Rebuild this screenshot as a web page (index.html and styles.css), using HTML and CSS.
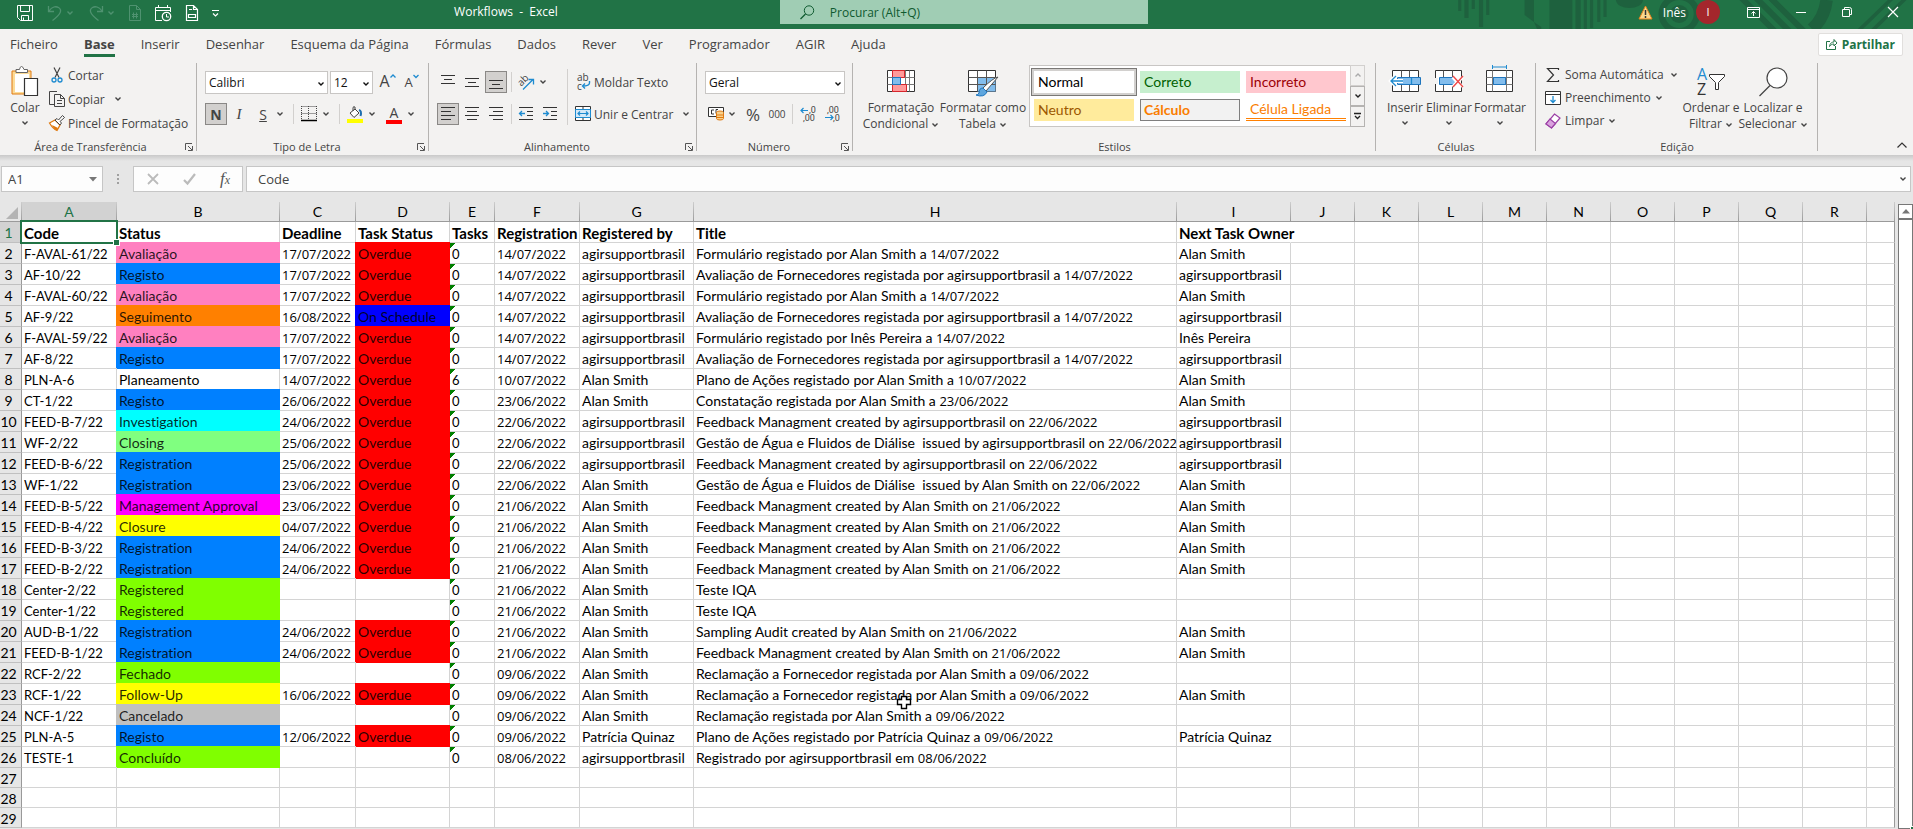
FILE: index.html
```html
<!DOCTYPE html>
<html lang="pt">
<head>
  <meta charset="UTF-8">
  <meta name="viewport" content="width=device-width, initial-scale=1.0">
  <title>Workflows - Excel</title>
  <link rel="stylesheet" href="styles.css">
</head>
<body>
  <svg class="sprite" aria-hidden="true">
    <symbol id="chev" viewBox="0 0 8 6"><path d="M1.5 1.5L4 4L6.5 1.5" fill="none" stroke="currentColor" stroke-width="1.4"/></symbol>
    <symbol id="launch" viewBox="0 0 8 8"><path d="M.5 7V.5H7M3 3L7 7M7.5 3V7.5H3" fill="none" stroke="#555"/></symbol>
  </svg>

  <header class="titlebar">
    <svg class="pattern" viewBox="0 0 450 29" preserveAspectRatio="none" aria-hidden="true">
      <g fill="#1e613e">
        <path d="M5 0h3v11H5zM11 0h4v18h-4zM18 0h3v9h-3zM25 0h4v27h-4zM32 0h3v15h-3zM69 0h9v22l-9-7zM78 22l7 5v2h-4zM93 0h22v29H93zM118 0h5v29h-5zM126 0h3v29h-3zM132 0h3v28h-3zM139 0h3v22h-3zM145 0h3v17h-3z"/>
        <path d="M157 0h26a13 8 0 0 1-26 0z"/>
        <path d="M390 29L419 0h5L395 29zM403 29L432 0h5L408 29z"/>
        <path d="M284 0l28 29h-8L276 0zM298 0l28 29h-8L290 0zM312 0l28 29h-8L304 0z"/>
      </g>
      <circle cx="218" cy="14" r="17" fill="none" stroke="#1e613e" stroke-width="6"/>
      <circle cx="218" cy="14" r="9" fill="#1e613e"/>
      <path d="M346 29Q358 18 360 0" fill="none" stroke="#1e613e" stroke-width="12"/>
    </svg>
    <div class="qat">
      <button aria-label="Guardar"><svg width="16" height="16"><path d="M.5.5h15v15H3.5l-3-3zM3.5.5v6h9v-6M4.500 15.500v-5h7v5M6.500 12.500v3" fill="none" stroke="#fff"/></svg></button>
      <button class="off" aria-label="Anular"><svg width="16" height="16"><path d="M1.500 1v5.500H7M2 6C5 1.500 9 1 11.500 2.500c4 2.500 2.500 6.500-6 13" fill="none" stroke="currentColor" stroke-width="1.300"/></svg><svg class="chev"><use href="#chev"/></svg></button>
      <button class="off" aria-label="Refazer"><svg width="16" height="16"><path d="M14.500 1v5.500H9M14 6C11 1.500 7 1 4.500 2.500c-4 2.500-2.500 6.500 6 13" fill="none" stroke="currentColor" stroke-width="1.300"/></svg><svg class="chev"><use href="#chev"/></svg></button>
      <button class="off" aria-label="Novo"><svg width="12" height="16"><path d="M.5.5h7l4 4v11H.5zM7.500.5v4h4M4.500 7.500v6M7.500 7.500v6M3 9.500h6M3 11.500h6" fill="none" stroke="currentColor"/></svg></button>
      <button aria-label="Calendário"><svg width="17" height="17"><path d="M7 15.500H.5v-13h15V7M.5 5.500h15M3.500 0v3M12.500 0v3" fill="none" stroke="#fff"/><circle cx="11.500" cy="11.500" r="4.200" fill="none" stroke="#fff" stroke-width="1.300"/><path d="M11.500 9v3H14" fill="none" stroke="#fff"/></svg></button>
      <button aria-label="Pré-visualizar"><svg width="12" height="16"><path d="M.5.5h7l4 4v11H.5zM7.500.5v4h4M3 4.500h3M2.500 9.500h7v3h-7z" fill="none" stroke="#fff" stroke-width="1.200"/></svg></button>
      <button aria-label="Personalizar"><svg width="7" height="7"><path d="M0 .5h7M1 3.500L3.500 6L6 3.500" fill="none" stroke="#fff" stroke-width="1.200"/></svg></button>
    </div>
    <div class="doc-title">Workflows&nbsp; -&nbsp; Excel</div>
    <label class="search">
      <svg width="15" height="15"><circle cx="9" cy="5.500" r="4.700" fill="none" stroke="#0f5a30"/><path d="M5.500 9L.5 14" stroke="#0f5a30" stroke-width="1.200"/></svg>
      <input type="search" placeholder="Procurar (Alt+Q)" aria-label="Procurar">
    </label>
    <div class="account">
      <svg width="15" height="15"><path d="M7.500 1L14 14H1z" fill="#f9d98c" stroke="#e8811a"/><path d="M7.500 5v5M7.500 11v2" stroke="#333" stroke-width="1.500"/></svg>
      <span class="user">Inês</span>
      <span class="avatar">I</span>
      <button aria-label="Opções do friso"><svg width="13" height="11"><path d="M.5.5h12v10H.5zM.5 2.500h12M6.500 9V4.500M4.500 6.500l2-2 2 2" fill="none" stroke="#fff"/></svg></button>
      <button aria-label="Minimizar"><svg width="10" height="10"><path d="M0 5.500h10" stroke="#fff"/></svg></button>
      <button aria-label="Restaurar"><svg width="10" height="10"><path d="M.5 2.500h7v7h-7zM2.500 2V.5h5q2 0 2 2V7.500H8" fill="none" stroke="#fff"/></svg></button>
      <button aria-label="Fechar"><svg width="10" height="10"><path d="M0 0l10 10M10 0L0 10" stroke="#fff" stroke-width="1.200"/></svg></button>
    </div>
  </header>

  <nav class="tabs">
    <a href="#">Ficheiro</a>
    <a href="#" class="active">Base</a>
    <a href="#">Inserir</a>
    <a href="#">Desenhar</a>
    <a href="#">Esquema da Página</a>
    <a href="#">Fórmulas</a>
    <a href="#">Dados</a>
    <a href="#">Rever</a>
    <a href="#">Ver</a>
    <a href="#">Programador</a>
    <a href="#">AGIR</a>
    <a href="#">Ajuda</a>
    <button class="share"><svg width="12" height="12"><path d="M4 3.500H.5v8h9V8M3.500 8.500C4 5 6 4 8 4V1.500L11 5 8 8V6C6 6 4.500 7 3.500 8.500z" fill="none" stroke="#217346"/></svg>Partilhar</button>
  </nav>

  <section class="ribbon">
    <div class="group clipboard">
      <div class="tools">
        <button class="big"><svg width="28" height="32"><path d="M1 5h19v23H1z" fill="#fcdb98" stroke="#e07a10"/><path d="M4 8h14v18H4z" fill="#fff"/><path d="M5 6.500V3.500h3.500Q9 .5 10.500.5T13 3.500h3.500v3z" fill="#fff" stroke="#666"/><path d="M13.500 12.500h13v17h-13z" fill="#fff" stroke="#333" stroke-width="1.200"/></svg><span>Colar</span><svg class="chev"><use href="#chev"/></svg></button>
        <div class="stack">
          <button><svg width="16" height="16"><path d="M5 .5l5 10M11 .5L6 10.500" fill="none" stroke="#444" stroke-width="1.200"/><circle cx="5" cy="13" r="2" fill="none" stroke="#1e8bd0" stroke-width="1.300"/><circle cx="11" cy="13" r="2" fill="none" stroke="#1e8bd0" stroke-width="1.300"/></svg>Cortar</button>
          <button><svg width="16" height="16"><path d="M5.500 13.500h-5V.5H8M5.500 3.500h6l4 4v8h-10zM11.500 3.500v4h4M8 9.500h5M8 12.500h5" fill="none" stroke="#444"/></svg>Copiar<svg class="chev far"><use href="#chev"/></svg></button>
          <button><svg width="16" height="16"><path d="M.5 8L6 5l5 5-3 5.500Q4 14 .5 8z" fill="#fff" stroke="#e07a10" stroke-width="1.300"/><path d="M3 10l6 3-1 2.500Q5 14.500 3 10z" fill="#e07a10"/><path d="M6 5l2-1.500L9.500 5 13.500.5l2 2L11 6.500 12.500 8 11 10z" fill="#fff" stroke="#444"/></svg>Pincel de Formatação</button>
        </div>
      </div>
      <div class="caption">Área de Transferência<svg class="launch"><use href="#launch"/></svg></div>
    </div>

    <div class="group font">
      <div class="rows">
        <div class="row">
          <span class="combo family"><select aria-label="Tipo de letra"><option>Calibri</option></select><svg class="chev"><use href="#chev"/></svg></span>
          <span class="combo size"><select aria-label="Tamanho"><option>12</option></select><svg class="chev"><use href="#chev"/></svg></span>
          <button class="ic grow" aria-label="Aumentar">A<svg width="6" height="5"><path d="M.5 3.500L3 1l2.500 2.500" fill="none" stroke="#1e8bd0" stroke-width="1.300"/></svg></button>
          <button class="ic grow small" aria-label="Diminuir">A<svg width="6" height="5"><path d="M.5 1L3 3.500 5.500 1" fill="none" stroke="#1e8bd0" stroke-width="1.300"/></svg></button>
        </div>
        <div class="row">
          <button class="ic on"><b>N</b></button>
          <button class="ic wide"><i>I</i></button>
          <button class="ic wide"><u>S</u></button>
          <svg class="chev"><use href="#chev"/></svg>
          <span class="sep"></span>
          <button class="ic wide" aria-label="Limites"><svg width="16" height="16"><path d="M.5.5h15M.5 7.500h15M.5 0v14M7.500 0v14M15.500 0v14" stroke="#444" stroke-dasharray="1 1"/><path d="M0 14.500h16" stroke="#000" stroke-width="1.500"/></svg></button>
          <svg class="chev"><use href="#chev"/></svg>
          <span class="sep"></span>
          <button class="ic wide" aria-label="Cor de preenchimento"><svg width="16" height="17"><path d="M3 7l5-4 4 4-5 4.500zM6 5V2q0-2 2-1v3" fill="#fff" stroke="#444"/><path d="M12 4q3 1 1.500 6" fill="none" stroke="#1e6fb0" stroke-width="2"/><path d="M0 13h16v4H0z" fill="#ff0"/></svg></button>
          <svg class="chev"><use href="#chev"/></svg>
          <button class="ic wide color">A</button>
          <svg class="chev"><use href="#chev"/></svg>
        </div>
      </div>
      <div class="caption">Tipo de Letra<svg class="launch"><use href="#launch"/></svg></div>
    </div>

    <div class="group align">
      <div class="tools">
        <div class="rows">
          <div class="row">
            <button class="ic" aria-label="Alinhar em cima"><svg width="14" height="14"><path d="M0 .5h14M3 4.500h8M0 8.500h14" stroke="#333"/></svg></button>
            <button class="ic" aria-label="Alinhar ao meio"><svg width="14" height="14"><path d="M0 3.500h14M3 7.500h8M0 11.500h14" stroke="#333"/></svg></button>
            <button class="ic on" aria-label="Alinhar em baixo"><svg width="14" height="14"><path d="M0 5.500h14M3 9.500h8M0 13.500h14" stroke="#333"/></svg></button>
            <span class="sep"></span>
            <button class="ic" aria-label="Orientação"><svg width="17" height="16"><path d="M5 15.500L15 5.500M10.500 5.500h5v5" fill="none" stroke="#1e8bd0" stroke-width="1.300"/><text x="0" y="9" transform="rotate(-45 6 7)" class="tiny">ab</text></svg></button>
            <svg class="chev"><use href="#chev"/></svg>
          </div>
          <div class="row">
            <button class="ic on" aria-label="Alinhar à esquerda"><svg width="14" height="14"><path d="M0 .5h14M0 4.500h10M0 8.500h14M0 12.500h10" stroke="#333"/></svg></button>
            <button class="ic" aria-label="Centrar"><svg width="14" height="14"><path d="M0 .5h14M2 4.500h10M0 8.500h14M2 12.500h10" stroke="#333"/></svg></button>
            <button class="ic" aria-label="Alinhar à direita"><svg width="14" height="14"><path d="M0 .5h14M4 4.500h10M0 8.500h14M4 12.500h10" stroke="#333"/></svg></button>
            <span class="sep"></span>
            <button class="ic" aria-label="Diminuir avanço"><svg width="14" height="14"><path d="M0 .5h14M8 4.500h6M8 8.500h6M0 12.500h14" stroke="#333"/><path d="M6 6.500H.5M3 4L.5 6.500 3 9" fill="none" stroke="#1e8bd0" stroke-width="1.300"/></svg></button>
            <button class="ic" aria-label="Aumentar avanço"><svg width="14" height="14"><path d="M0 .5h14M8 4.500h6M8 8.500h6M0 12.500h14" stroke="#333"/><path d="M0 6.500h5.500M3 4l2.500 2.500L3 9" fill="none" stroke="#1e8bd0" stroke-width="1.300"/></svg></button>
          </div>
        </div>
        <div class="rows merge">
          <button class="row text"><svg width="16" height="18"><text x="2" y="8" class="tiny">ab</text><text x="2" y="17" class="tiny">c</text><path d="M14.500 8v2q0 3-7 3M10 10.500L7.500 13l2.500 2.500" fill="none" stroke="#1e8bd0" stroke-width="1.400"/></svg>Moldar Texto</button>
          <button class="row text"><svg width="16" height="16"><path d="M.5.5h15v14H.5zM8 0v3M8 12v3" fill="#fff" stroke="#333"/><path d="M.5 3.500h15v8H.5z" fill="#d5e9f8" stroke="#1e8bd0"/><path d="M3 7.500h10M5 5.500l-2 2 2 2M11 5.500l2 2-2 2" fill="none" stroke="#1e8bd0" stroke-width="1.200"/></svg>Unir e Centrar<svg class="chev far"><use href="#chev"/></svg></button>
        </div>
      </div>
      <div class="caption">Alinhamento<svg class="launch"><use href="#launch"/></svg></div>
    </div>

    <div class="group number">
      <div class="rows">
        <div class="row">
          <span class="combo format"><select aria-label="Formato de número"><option>Geral</option></select><svg class="chev"><use href="#chev"/></svg></span>
        </div>
        <div class="row">
          <button class="ic" aria-label="Contabilidade"><svg width="17" height="14"><path d="M.5.5h15v9H.5z" fill="#fff" stroke="#333"/><path d="M6 3H3.500v4H6M10 2.500H8v4" fill="none" stroke="#333"/><path d="M8.500 5.500v6q0 1.500 3.500 1.500t3.500-1.500v-6q0-1.500-3.500-1.500T8.500 5.500z" fill="#f9d08a" stroke="#e07a10"/><path d="M8.500 8h7M8.500 10.500h7" stroke="#e07a10"/></svg></button>
          <svg class="chev"><use href="#chev"/></svg>
          <button class="ic wide percent">%</button>
          <button class="ic wide zeros">000</button>
          <span class="sep"></span>
          <button class="ic wide" aria-label="Aumentar casas decimais"><svg width="17" height="16"><text x="9" y="7" class="digits">,0</text><text x="3" y="15" class="digits">,00</text><path d="M8 4.500H1M3.500 2L1 4.500 3.500 7" fill="none" stroke="#1e8bd0" stroke-width="1.200"/></svg></button>
          <button class="ic wide" aria-label="Diminuir casas decimais"><svg width="17" height="16"><text x="3" y="7" class="digits">,00</text><text x="9" y="15" class="digits">,0</text><path d="M1 11.500h8M6.500 9L9 11.500 6.500 14" fill="none" stroke="#1e8bd0" stroke-width="1.200"/></svg></button>
        </div>
      </div>
      <div class="caption">Número<svg class="launch"><use href="#launch"/></svg></div>
    </div>

    <div class="group styles">
      <div class="tools">
        <button class="big w80"><svg width="28" height="32"><path d="M.5 4.500h27v21H.5z" fill="#fff" stroke="#333"/><path d="M.5 11.500h27M.5 18.500h27M5.500 4.500v21M18.500 4.500v21M22.500 4.500v21" stroke="#777"/><path d="M5.500 4.500h12v7h-12zM5.500 18.500h14v7h-14z" fill="#ff9a9a" stroke="#d8262c"/><path d="M5.500 11.500h8v7h-8z" fill="#83bdec" stroke="#1e75bd"/></svg><span>Formatação<br>Condicional <svg class="chev"><use href="#chev"/></svg></span></button>
        <button class="big w84"><svg width="32" height="32"><path d="M1.500 4.500h27v21h-27z" fill="#fff" stroke="#333"/><path d="M10.500 11.500h18v14h-18z" fill="#83bdec"/><path d="M1.500 11.500h27M1.500 18.500h27M10.500 4.500v21M19.500 4.500v21" stroke="#555"/><path d="M31 11l-12 14-3-3Q26 12 31 11z" fill="#fff" stroke="#555"/><path d="M16 22q-4 0-4 5-1 2-3 2 8 3 11-3z" fill="#5ea6de" stroke="#1e75bd"/></svg><span>Formatar como<br>Tabela <svg class="chev"><use href="#chev"/></svg></span></button>
        <div class="gallery">
          <button class="st normal">Normal</button>
          <button class="st good">Correto</button>
          <button class="st bad">Incorreto</button>
          <button class="st neutral">Neutro</button>
          <button class="st calc">Cálculo</button>
          <button class="st linked">Célula Ligada</button>
        </div>
        <div class="gallery-nav">
          <button class="up" aria-label="Linha anterior"><svg class="chev flip"><use href="#chev"/></svg></button>
          <button aria-label="Linha seguinte"><svg class="chev"><use href="#chev"/></svg></button>
          <button aria-label="Mais"><svg width="7" height="7"><path d="M0 .5h7M1 3L3.500 5.500 6 3" fill="none" stroke="#222" stroke-width="1.300"/></svg></button>
        </div>
      </div>
      <div class="caption">Estilos</div>
    </div>

    <div class="group cells">
      <div class="tools">
        <button class="big"><svg width="32" height="32"><path d="M3.500 4.500h26v21h-26z" fill="#fff" stroke="#333"/><path d="M12.500 4.500v21M20.500 4.500v21" stroke="#555"/><path d="M8.500 11.500h23v7h-23z" fill="#83bdec" stroke="#1e75bd"/><path d="M0 11h4v8H0z" fill="#f3f2f1"/><path d="M14 15H2M7 10l-5 5 5 5" fill="none" stroke="#fff" stroke-width="4"/><path d="M14 15H2M7 10l-5 5 5 5M22.500 12v6" fill="none" stroke="#1e8bd0" stroke-width="1.300"/></svg><span>Inserir</span><svg class="chev"><use href="#chev"/></svg></button>
        <button class="big w46"><svg width="30" height="32"><path d="M1.500 4.500h26v21h-26z" fill="#fff" stroke="#333"/><path d="M9.500 4.500v21M18.500 4.500v21" stroke="#555"/><path d="M0 12h4v6H0z" fill="#f3f2f1"/><path d="M5.500 11.500h14l3 3.500-3 3.500h-14z" fill="#83bdec" stroke="#1e75bd"/><path d="M19 11l9 10M28 11l-9 10" stroke="#fff" stroke-width="4"/><path d="M19 10l10 11M29 10L19 21" stroke="#f04848" stroke-width="1.400"/></svg><span>Eliminar</span><svg class="chev"><use href="#chev"/></svg></button>
        <button class="big w56"><svg width="28" height="32"><path d="M.5 4.500h26v21H.5z" fill="#fff" stroke="#333"/><path d="M.5 11.500h26M.5 18.500h26M6.500 4.500v21M20.500 4.500v21" stroke="#777"/><path d="M7.500 11.500h12v7h-12z" fill="#83bdec" stroke="#1e75bd"/><path d="M6 1h15M6.500-1v4M20.500-1v4" stroke="#1e8bd0"/></svg><span>Formatar</span><svg class="chev"><use href="#chev"/></svg></button>
      </div>
      <div class="caption">Células</div>
    </div>

    <div class="group editing">
      <div class="tools">
        <div class="stack">
          <button><svg width="16" height="16"><path d="M13.500 3V1.500h-11l6 6.500-6 6.500h11V13" fill="none" stroke="#333" stroke-width="1.200"/></svg>Soma Automática<svg class="chev far"><use href="#chev"/></svg></button>
          <button><svg width="16" height="16"><path d="M.5 1.500h15v13H.5zM.5 4.500h15" fill="#fff" stroke="#333"/><path d="M8 6v6.500M5.500 10L8 12.500l2.500-2.500" fill="none" stroke="#1e8bd0" stroke-width="1.300"/></svg>Preenchimento<svg class="chev"><use href="#chev"/></svg></button>
          <button><svg width="16" height="16"><path d="M9.500 1L15 5 6.500 15 1 11z" fill="#fff" stroke="#9b3fa5" stroke-width="1.200"/><path d="M5 6l5.500 4.500-4 4.500L1 11z" fill="#d9a3de" stroke="#9b3fa5" stroke-width="1.200"/></svg>Limpar<svg class="chev"><use href="#chev"/></svg></button>
        </div>
        <button class="big w56"><svg width="30" height="32"><text x="1" y="14" class="az a">A</text><text x="1" y="29" class="az">Z</text><path d="M13.500 8.500h15v2l-6 6v7h-3v-7l-6-6z" fill="#fff" stroke="#333"/></svg><span>Ordenar e<br>Filtrar <svg class="chev"><use href="#chev"/></svg></span></button>
        <button class="big w68"><svg width="30" height="32"><circle cx="19" cy="12" r="10" fill="#fff" stroke="#444" stroke-width="1.200"/><path d="M12 19.500L1.500 30" stroke="#444" stroke-width="1.300"/></svg><span>Localizar e<br>Selecionar <svg class="chev"><use href="#chev"/></svg></span></button>
      </div>
      <div class="caption">Edição</div>
    </div>
    <button class="collapse" aria-label="Recolher o friso"><svg width="10" height="6"><path d="M.5 5.500L5 1l4.500 4.500" fill="none" stroke="#333" stroke-width="1.200"/></svg></button>
  </section>

  <div class="formula-bar">
    <span class="name-box"><input value="A1" aria-label="Caixa de nome"><svg width="8" height="5"><path d="M0 0h8L4 4.500z" fill="#777"/></svg></span>
    <span class="dots"></span>
    <span class="fx">
      <button aria-label="Cancelar"><svg width="12" height="12"><path d="M1 1l10 10M11 1L1 11" stroke="#bbb" stroke-width="1.800"/></svg></button>
      <button aria-label="Introduzir"><svg width="13" height="12"><path d="M1 7l3.500 3.500L12 1" fill="none" stroke="#bbb" stroke-width="2.200"/></svg></button>
      <button class="fn"><i>f<small>x</small></i></button>
    </span>
    <span class="formula"><input value="Code" aria-label="Barra de fórmulas"><svg class="chev"><use href="#chev"/></svg></span>
  </div>

  <main class="sheet">
    <div class="grid-wrap">
      <table class="grid">
        <colgroup id="cols"></colgroup>
        <thead id="letters"></thead>
        <tbody id="cells"></tbody>
      </table>
      <svg class="cursor" width="15" height="15"><path d="M4.500 1.500h5v3h4v5h-4v4h-5v-4h-4v-5h4z" fill="#fff" stroke="#000" stroke-width="1.400"/></svg>
    </div>
    <div class="scrollbar"><button aria-label="Deslocar para cima"><svg width="8" height="5"><path d="M0 4.500h8L4 0z" fill="#777"/></svg></button></div>
  </main>

  <script>
    const letters = 'ABCDEFGHIJKLMNOPQR'.split('');
    const headers = ['Code', 'Status', 'Deadline', 'Task Status', 'Tasks', 'Registration', 'Registered by', 'Title', 'Next Task Owner'];
    const agir = 'agirsupportbrasil';
    const alan = 'Alan Smith';

    const rows = [
      ['F-AVAL-61/22', 'Avaliação', '17/07/2022', 'Overdue', '0', '14/07/2022', agir, 'Formulário registado por Alan Smith a 14/07/2022', alan],
      ['AF-10/22', 'Registo', '17/07/2022', 'Overdue', '0', '14/07/2022', agir, 'Avaliação de Fornecedores registada por agirsupportbrasil a 14/07/2022', agir],
      ['F-AVAL-60/22', 'Avaliação', '17/07/2022', 'Overdue', '0', '14/07/2022', agir, 'Formulário registado por Alan Smith a 14/07/2022', alan],
      ['AF-9/22', 'Seguimento', '16/08/2022', 'On Schedule', '0', '14/07/2022', agir, 'Avaliação de Fornecedores registada por agirsupportbrasil a 14/07/2022', agir],
      ['F-AVAL-59/22', 'Avaliação', '17/07/2022', 'Overdue', '0', '14/07/2022', agir, 'Formulário registado por Inês Pereira a 14/07/2022', 'Inês Pereira'],
      ['AF-8/22', 'Registo', '17/07/2022', 'Overdue', '0', '14/07/2022', agir, 'Avaliação de Fornecedores registada por agirsupportbrasil a 14/07/2022', agir],
      ['PLN-A-6', 'Planeamento', '14/07/2022', 'Overdue', '6', '10/07/2022', alan, 'Plano de Ações registado por Alan Smith a 10/07/2022', alan],
      ['CT-1/22', 'Registo', '26/06/2022', 'Overdue', '0', '23/06/2022', alan, 'Constatação registada por Alan Smith a 23/06/2022', alan],
      ['FEED-B-7/22', 'Investigation', '24/06/2022', 'Overdue', '0', '22/06/2022', agir, 'Feedback Managment created by agirsupportbrasil on 22/06/2022', agir],
      ['WF-2/22', 'Closing', '25/06/2022', 'Overdue', '0', '22/06/2022', agir, 'Gestão de Água e Fluidos de Diálise&nbsp; issued by agirsupportbrasil on 22/06/2022', agir],
      ['FEED-B-6/22', 'Registration', '25/06/2022', 'Overdue', '0', '22/06/2022', agir, 'Feedback Managment created by agirsupportbrasil on 22/06/2022', agir],
      ['WF-1/22', 'Registration', '23/06/2022', 'Overdue', '0', '22/06/2022', alan, 'Gestão de Água e Fluidos de Diálise&nbsp; issued by Alan Smith on 22/06/2022', alan],
      ['FEED-B-5/22', 'Management Approval', '23/06/2022', 'Overdue', '0', '21/06/2022', alan, 'Feedback Managment created by Alan Smith on 21/06/2022', alan],
      ['FEED-B-4/22', 'Closure', '04/07/2022', 'Overdue', '0', '21/06/2022', alan, 'Feedback Managment created by Alan Smith on 21/06/2022', alan],
      ['FEED-B-3/22', 'Registration', '24/06/2022', 'Overdue', '0', '21/06/2022', alan, 'Feedback Managment created by Alan Smith on 21/06/2022', alan],
      ['FEED-B-2/22', 'Registration', '24/06/2022', 'Overdue', '0', '21/06/2022', alan, 'Feedback Managment created by Alan Smith on 21/06/2022', alan],
      ['Center-2/22', 'Registered', '', '', '0', '21/06/2022', alan, 'Teste IQA', ''],
      ['Center-1/22', 'Registered', '', '', '0', '21/06/2022', alan, 'Teste IQA', ''],
      ['AUD-B-1/22', 'Registration', '24/06/2022', 'Overdue', '0', '21/06/2022', alan, 'Sampling Audit created by Alan Smith on 21/06/2022', alan],
      ['FEED-B-1/22', 'Registration', '24/06/2022', 'Overdue', '0', '21/06/2022', alan, 'Feedback Managment created by Alan Smith on 21/06/2022', alan],
      ['RCF-2/22', 'Fechado', '', '', '0', '09/06/2022', alan, 'Reclamação a Fornecedor registada por Alan Smith a 09/06/2022', ''],
      ['RCF-1/22', 'Follow-Up', '16/06/2022', 'Overdue', '0', '09/06/2022', alan, 'Reclamação a Fornecedor registada por Alan Smith a 09/06/2022', alan],
      ['NCF-1/22', 'Cancelado', '', '', '0', '09/06/2022', alan, 'Reclamação registada por Alan Smith a 09/06/2022', ''],
      ['PLN-A-5', 'Registo', '12/06/2022', 'Overdue', '0', '09/06/2022', 'Patrícia Quinaz', 'Plano de Ações registado por Patrícia Quinaz a 09/06/2022', 'Patrícia Quinaz'],
      ['TESTE-1', 'Concluído', '', '', '0', '08/06/2022', agir, 'Registrado por agirsupportbrasil em 08/06/2022', '']
    ];

    const fills = {
      'Avaliação': 'pink',
      'Registo': 'blue',
      'Registration': 'blue',
      'Seguimento': 'orange',
      'Investigation': 'cyan',
      'Closing': 'mint',
      'Management Approval': 'magenta',
      'Closure': 'yellow',
      'Follow-Up': 'yellow',
      'Registered': 'lime',
      'Fechado': 'lime',
      'Concluído': 'lime',
      'Cancelado': 'gray',
      'Overdue': 'red',
      'On Schedule': 'navy'
    };

    const markDates = text => text.replace(/\d\d\/\d\d\/\d{4}/g, '<span class="date">$&</span>');

    document.getElementById('cols').innerHTML =
      '<col class="c-num">' + letters.map(l => `<col class="c-${l}">`).join('') + '<col>';

    document.getElementById('letters').innerHTML =
      '<tr><th class="corner"></th>' +
      letters.map(l => `<th scope="col"${l === 'A' ? ' class="sel"' : ''}>${l}</th>`).join('') +
      '<th></th></tr>';

    let html = '';
    for (let n = 1; n <= 29; n++) {
      const data = n === 1 ? headers : rows[n - 2] || [];
      const cls = n === 1 ? 'head' : n > 26 ? 'blank' : '';
      html += `<tr class="${cls}"><th scope="row"${n === 1 ? ' class="sel"' : ''}>${n}</th>`;
      for (let c = 0; c <= letters.length; c++) {
        const text = data[c] || '';
        const list = [];
        if (n > 1 && fills[text]) list.push('fill', fills[text]);
        if (n > 1 && (c === 0 || c === 4)) list.push('num');
        if (c === 4 && n > 1 && text) list.push('flag');
        if (c === 0 && n === 1) list.push('active');
        if (c === 8 && n === 1) list.push('spill');
        html += `<td class="${list.join(' ')}">${markDates(text)}</td>`;
      }
      html += '</tr>';
    }
    document.getElementById('cells').innerHTML = html;
  </script>
</body>
</html>
```
FILE: styles.css
```css
* {
  box-sizing: border-box;
}
body {
  margin: 0;
  height: 100vh;
  overflow: hidden;
  display: flex;
  flex-direction: column;
  background: #e6e6e6;
  font-family: 'Open Sans', 'Noto Sans', sans-serif;
  font-size: 12px;
  color: #444;
}
button, input, select {
  font: inherit;
  color: inherit;
  border: none;
  background: none;
  padding: 0;
  margin: 0;
}
svg {
  flex: none;
  overflow: visible;
}
.sprite {
  position: absolute;
  width: 0;
  height: 0;
}
.chev {
  width: 8px;
  height: 6px;
}
.flip {
  transform: rotate(180deg);
}

/* title bar */
.titlebar {
  position: relative;
  display: flex;
  height: 29px;
  background: #217346;
  color: #fff;
  overflow: hidden;
}
.pattern {
  position: absolute;
  right: -7px;
  top: 0;
  width: 467px;
  height: 29px;
}
.qat {
  display: flex;
  align-items: center;
  height: 26px;
  width: 232px;
  padding-left: 17px;
  gap: 14px;
}
.qat button {
  display: flex;
  align-items: center;
  gap: 3px;
}
.qat .off {
  color: #4f9270;
}
.doc-title {
  flex: 1;
  text-align: center;
  line-height: 24px;
}
.search {
  flex: 0 0 368px;
  display: flex;
  align-items: center;
  gap: 15px;
  height: 24px;
  padding-left: 20px;
  background: #a0cdb4;
}
.search input {
  flex: 1;
  outline: none;
}
.search input::placeholder {
  color: #0f5a30;
  opacity: 1;
}
.account {
  position: relative;
  flex: 0 0 40%;
  display: flex;
  align-items: center;
  justify-content: flex-end;
  height: 24px;
  padding-right: 15px;
}
.account button {
  display: flex;
  margin-left: 36px;
}
.account .avatar + button {
  margin-left: 27px;
}
.user {
  margin: 0 10px 0 10px;
}
.avatar {
  width: 24px;
  height: 24px;
  border-radius: 50%;
  background: #a4262c;
  text-align: center;
  line-height: 24px;
  font-size: 11px;
}

/* tabs */
.tabs {
  display: flex;
  align-items: center;
  height: 34px;
  padding: 0 10px 4px 10px;
  gap: 26px;
  background: #f3f2f1;
  font-size: 13px;
}
.tabs a {
  color: #444;
  text-decoration: none;
  line-height: 20px;
  padding-top: 3px;
  border-bottom: 3px solid transparent;
}
.tabs .active {
  font-weight: bold;
  border-color: #217346;
}
.share {
  display: flex;
  align-items: center;
  gap: 4px;
  margin-left: auto;
  height: 23px;
  padding: 0 7px;
  background: #fff;
  border: 1px solid #e1dfdd;
  border-radius: 2px;
  color: #217346;
  font-size: 12px;
  font-weight: bold;
}

/* ribbon */
.ribbon {
  display: flex;
  height: 92px;
  background: #f3f2f1;
  white-space: nowrap;
}
.group {
  flex: none;
  display: flex;
  flex-direction: column;
  justify-content: space-between;
  padding-left: 8px;
  background: linear-gradient(#b5b3b1, #b5b3b1) right top / 1px 88px no-repeat;
}
.clipboard {
  width: 197px;
  padding-left: 4px;
}
.font {
  width: 232px;
}
.align {
  width: 268px;
}
.number {
  width: 156px;
}
.styles {
  width: 523px;
}
.cells {
  width: 160px;
}
.editing {
  width: 282px;
}
.caption {
  position: relative;
  margin-left: -8px;
  padding-right: 12px;
  line-height: 16px;
  text-align: center;
  font-size: 11px;
}
.cells .caption, .editing .caption, .styles .caption {
  padding-right: 0;
}
.launch {
  position: absolute;
  right: 4px;
  top: 4px;
  width: 8px;
  height: 8px;
}
.tools {
  display: flex;
}
.big {
  display: flex;
  flex-direction: column;
  align-items: center;
  padding-top: 3px;
  width: 42px;
  line-height: 16px;
}
.big > .chev {
  margin-top: 4px;
}
.big > svg:first-child {
  margin-bottom: 2px;
}
.w80 {
  width: 80px;
}
.w84 {
  width: 84px;
}
.w46 {
  width: 46px;
}
.w56 {
  width: 56px;
}
.w68 {
  width: 68px;
}
.stack {
  display: flex;
  flex-direction: column;
  padding-left: 3px;
}
.stack button {
  display: flex;
  align-items: center;
  gap: 3px;
  height: 24px;
}
.editing .stack {
  width: 139px;
  padding-left: 1px;
}
.editing .stack button {
  height: 23px;
  gap: 4px;
}
.stack .far, .text .far {
  margin-left: 6px;
}
.editing .far {
  margin-left: 2px;
}
.rows {
  display: flex;
  flex-direction: column;
  gap: 10px;
  padding-top: 8px;
}
.row {
  display: flex;
  align-items: center;
  height: 22px;
}
.combo {
  position: relative;
  height: 23px;
  margin-right: 2px;
  background: #fff;
  border: 1px solid #c8c6c4;
  color: #111;
}
.combo select {
  width: 100%;
  height: 21px;
  padding-left: 3px;
  appearance: none;
}
.combo .chev {
  position: absolute;
  right: 2px;
  top: 9px;
}
.family {
  width: 123px;
}
.size {
  width: 43px;
}
.format {
  width: 140px;
}
.ic {
  display: flex;
  align-items: center;
  justify-content: center;
  width: 22px;
  height: 22px;
}
.wide {
  width: 24px;
}
.on {
  background: #d2d0ce;
  border: 1px solid #8a8886;
}
.ic b {
  font-size: 14px;
}
.ic i {
  font-family: 'Liberation Serif', serif;
  font-size: 15px;
}
.ic u {
  font-size: 14px;
}
.grow {
  align-items: flex-start;
  margin-left: 1px;
  width: 23px;
  font-size: 16px;
  line-height: 20px;
}
.grow svg {
  margin-top: 3px;
}
.small {
  font-size: 13px;
  line-height: 22px;
}
.color {
  height: 19px;
  width: 16px;
  margin: 0 4px 0 9px;
  border-bottom: 4px solid #f00;
  font-size: 14px;
}
.percent {
  font-size: 17px;
}
.zeros {
  font-size: 10px;
}
.sep {
  width: 1px;
  height: 20px;
  margin: 0 3px 0 8px;
  background: #d2d0ce;
}
.font .row > .chev, .number .row > .chev {
  margin: 0 1px;
}
.number .row > .chev {
  margin-right: 5px;
}
.number .sep {
  margin-left: 3px;
}
.align .rows:first-child .row {
  gap: 2px;
  width: 130px;
}
.align .sep {
  margin: 0 1px 0 2px;
}
.merge {
  margin-top: 6px;
  padding: 2px 0 0 7px;
  border-left: 1px solid #d2d0ce;
}
.text {
  gap: 3px;
}
.tiny {
  font-size: 10px;
  fill: #444;
}
.digits {
  font-family: Roboto, sans-serif;
  font-size: 9px;
  fill: #444;
}
.az {
  font-size: 16px;
  fill: #333;
}
.a {
  fill: #1e8bd0;
}

.gallery {
  display: grid;
  grid-template-columns: repeat(3, 100px);
  gap: 6px;
  height: 62px;
  margin: 2px 0 0 4px;
  padding: 5px 4px;
  background: #fff;
  border: 1px solid #c8c6c4;
  border-right: none;
}
.st {
  height: 22px;
  padding-left: 4px;
  text-align: left;
  font-family: Lato, sans-serif;
  font-size: 14px;
  line-height: 20px;
}
.normal {
  color: #000;
  box-shadow: 0 0 0 2px #d2d0ce, 0 0 0 3px #7a7876;
}
.good {
  background: #c6efce;
  color: #006100;
}
.bad {
  background: #ffc7ce;
  color: #9c0006;
}
.neutral {
  background: #ffeb9c;
  color: #9c5700;
}
.calc {
  background: #f2f2f2;
  border: 1px solid #7f7f7f;
  color: #fa7d00;
  font-weight: bold;
  padding-left: 3px;
}
.linked {
  color: #fa7d00;
  border-bottom: 3px double #ff8001;
}
.gallery-nav {
  display: flex;
  flex-direction: column;
  margin-top: 2px;
  width: 15px;
  height: 62px;
}
.gallery-nav button {
  flex: 1;
  display: flex;
  align-items: center;
  justify-content: center;
  border: 1px solid #b5b3b1;
  color: #222;
}
.gallery-nav .up {
  color: #aaa;
  border-color: #d2d0ce;
}
.collapse {
  margin: auto 6px 3px auto;
}

/* formula bar */
.formula-bar {
  display: flex;
  height: 47px;
  padding: 11px 2px 10px 1px;
  background: linear-gradient(#c9c9c9, #e6e6e6 6px);
  font-size: 13px;
}
.name-box, .fx, .formula {
  position: relative;
  display: flex;
  align-items: center;
  height: 26px;
  background: #fdfdfd;
  border: 1px solid #c6c6c6;
}
.name-box {
  width: 102px;
}
.name-box input {
  width: 87px;
  padding-left: 6px;
}
.dots {
  width: 2px;
  height: 11px;
  margin: 8px 14px;
  background: repeating-linear-gradient(#a0a0a0 0 2px, transparent 2px 4px);
}
.fx {
  width: 110px;
  padding-left: 13px;
  gap: 24px;
}
.fx button {
  display: flex;
}
.fn i {
  font-family: 'Liberation Serif', serif;
  font-size: 17px;
  line-height: 20px;
  color: #555;
}
.fn small {
  font-size: 12px;
}
.formula {
  flex: 1;
  margin-left: 3px;
  padding: 0 3px 0 11px;
}
.formula input {
  flex: 1;
}

/* worksheet */
.sheet {
  flex: 1;
  min-height: 0;
  display: flex;
}
.grid-wrap {
  flex: 1;
  position: relative;
  overflow: hidden;
}
.grid {
  width: 100%;
  table-layout: fixed;
  border-collapse: separate;
  border-spacing: 0;
  font-family: Lato, sans-serif;
  font-size: 14px;
  font-variant-ligatures: none;
  line-height: 18px;
  color: #000;
}
col {
  width: 64px;
}
col:last-child {
  width: auto;
}
.c-num {
  width: 22px;
}
.c-A {
  width: 95px;
}
.c-B {
  width: 163px;
}
.c-C {
  width: 76px;
}
.c-D {
  width: 94px;
}
.c-E {
  width: 45px;
}
.c-F {
  width: 85px;
}
.c-G, .c-I {
  width: 114px;
}
.c-H {
  width: 483px;
}
.grid th {
  padding: 0;
  font-weight: normal;
  text-align: center;
  background: #e6e6e6;
}
.grid thead th {
  height: 20px;
  line-height: 19px;
  border-bottom: 1px solid #999;
  border-right: 1px solid;
  border-image: linear-gradient(#d0d0d0, #999) 1;
}
.grid tbody th {
  border-right: 1px solid #999;
  border-bottom: 1px solid #c0c0c0;
  padding: 2px 4px 0 0;
}
.grid .sel {
  background: #d2d2d2;
  color: #217346;
}
.corner {
  position: relative;
}
.corner::after {
  content: '';
  position: absolute;
  right: 3px;
  bottom: 2px;
  border: 6px solid #b4b4b4;
  border-top-color: transparent;
  border-left-color: transparent;
}
.grid td {
  height: 21px;
  padding: 2px 0 0 2px;
  white-space: nowrap;
  background: #fff;
  border-right: 1px solid #d4d4d4;
  border-bottom: 1px solid #d4d4d4;
}
.grid td:last-child {
  border-right-color: #999;
}
.grid .blank td, .grid .blank th {
  height: 20px;
  line-height: 17px;
}
.grid .num {
  font-size: 13px;
}
.date {
  font-family: 'Open Sans', sans-serif;
  font-size: 13px;
  line-height: 1;
}
.head td {
  font-size: 15px;
  font-weight: bold;
}
.grid .spill {
  border-right-color: transparent;
}
.grid .active {
  position: relative;
}
.active::before {
  content: '';
  position: absolute;
  inset: -2px;
  border: 2px solid #217346;
}
.active::after {
  content: '';
  position: absolute;
  right: -3px;
  bottom: -3px;
  width: 5px;
  height: 5px;
  background: #217346;
  outline: 1px solid #fff;
}
.grid .fill {
  background: var(--c);
  border-color: var(--c);
  box-shadow: 0 -1px 0 var(--c), -1px -1px 0 var(--c);
  color: rgba(0, 0, 0, 0.85);
}
.pink {
  --c: #ff80c0;
}
.blue {
  --c: #0080ff;
}
.orange {
  --c: #ff8000;
}
.cyan {
  --c: #00ffff;
}
.mint {
  --c: #80ff80;
}
.magenta {
  --c: #ff00ff;
}
.yellow {
  --c: #ffff00;
}
.lime {
  --c: #80ff00;
}
.gray {
  --c: #c0c0c0;
}
.red {
  --c: #ff0000;
}
.navy {
  --c: #0000ff;
}
.grid .flag {
  background: linear-gradient(135deg, #008000 4px, transparent 4px) #fff;
}
.cursor {
  position: absolute;
  left: 897px;
  top: 493px;
}
.scrollbar {
  width: 15px;
  margin: 2px 0 0 3px;
  border: 1px solid #777;
  background: #fff;
}
.scrollbar button {
  display: flex;
  align-items: center;
  justify-content: center;
  width: 100%;
  height: 15px;
  border-bottom: 2px solid #777;
}
```
